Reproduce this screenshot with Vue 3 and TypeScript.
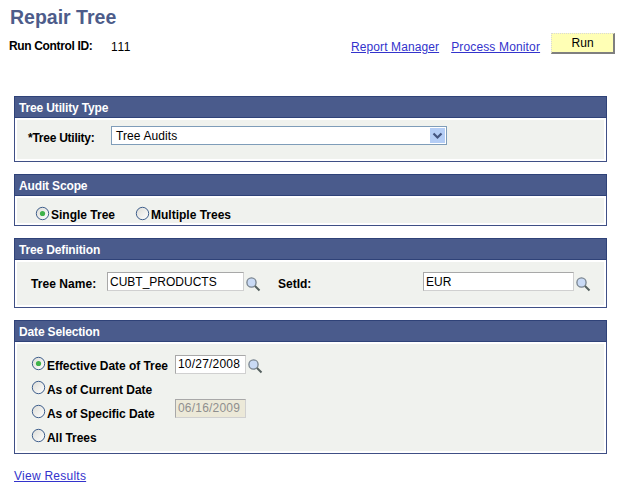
<script setup lang="ts">
const dateOptions: { label: string; on: boolean }[] = [
  { label: 'Effective Date of Tree', on: true },
  { label: 'As of Current Date', on: false },
  { label: 'As of Specific Date', on: false },
  { label: 'All Trees', on: false },
]
</script>

<template>
  <div class="page">
    <h1 class="title">Repair Tree</h1>
    <div class="toolbar">
      <span class="rc-label">Run Control ID:</span>
      <span class="rc-value">111</span>
      <a class="link report" href="#">Report Manager</a>
      <a class="link process" href="#">Process Monitor</a>
      <button class="run" type="button">Run</button>
    </div>

    <section class="panel utility">
      <h2 class="head">Tree Utility Type</h2>
      <div class="body utility-body">
        <span class="lab">*Tree Utility:</span>
        <div class="select">
          <span class="select-text">Tree Audits</span>
          <span class="arrow">
            <svg width="15" height="15" viewBox="0 0 15 15">
              <path d="M3.5 5.5 L7.5 9.5 L11.5 5.5" fill="none" stroke="#44557f" stroke-width="2.2" />
            </svg>
          </span>
        </div>
      </div>
    </section>

    <section class="panel scope">
      <h2 class="head">Audit Scope</h2>
      <div class="body scope-body">
        <label class="radio r1">
          <svg class="dot" width="15" height="15" viewBox="0 0 15 15">
            <defs>
              <linearGradient id="rg" x1="0" y1="0" x2="1" y2="1">
                <stop offset="0" stop-color="#dcdcd6" /><stop offset="1" stop-color="#ffffff" />
              </linearGradient>
            </defs>
            <circle cx="7.5" cy="7.5" r="6.2" fill="url(#rg)" stroke="#3f5f8c" />
            <circle cx="7.5" cy="7.5" r="2.6" fill="#3fb24a" />
          </svg>
          Single Tree
        </label>
        <label class="radio r2">
          <svg class="dot" width="15" height="15" viewBox="0 0 15 15">
            <circle cx="7.5" cy="7.5" r="6.2" fill="url(#rg)" stroke="#3f5f8c" />
          </svg>
          Multiple Trees
        </label>
      </div>
    </section>

    <section class="panel definition">
      <h2 class="head">Tree Definition</h2>
      <div class="body def-body">
        <span class="lab name-lab">Tree Name:</span>
        <div class="input name-input">CUBT_PRODUCTS</div>
        <svg class="glass" width="16" height="16" viewBox="0 0 16 16">
          <circle cx="6.5" cy="6.5" r="4.6" fill="#c9daf5" stroke="#77838f" stroke-width="1.3" />
          <path d="M10 10 L14.5 14.5" stroke="#55605f" stroke-width="2" />
        </svg>
        <span class="lab set-lab">SetId:</span>
        <div class="input set-input">EUR</div>
        <svg class="glass" width="16" height="16" viewBox="0 0 16 16">
          <circle cx="6.5" cy="6.5" r="4.6" fill="#c9daf5" stroke="#77838f" stroke-width="1.3" />
          <path d="M10 10 L14.5 14.5" stroke="#55605f" stroke-width="2" />
        </svg>
      </div>
    </section>

    <section class="panel dates">
      <h2 class="head">Date Selection</h2>
      <div class="body date-body">
        <div class="date-options">
          <label v-for="o in dateOptions" :key="o.label" class="radio">
            <svg class="dot" width="15" height="15" viewBox="0 0 15 15">
              <circle cx="7.5" cy="7.5" r="6.2" fill="url(#rg)" stroke="#3f5f8c" />
              <circle v-if="o.on" cx="7.5" cy="7.5" r="2.6" fill="#3fb24a" />
            </svg>
            {{ o.label }}
          </label>
        </div>
        <div class="date-inputs">
          <div class="date-row">
            <div class="input date-input">10/27/2008</div>
            <svg class="glass date-glass" width="16" height="16" viewBox="0 0 16 16">
              <circle cx="6.5" cy="6.5" r="4.6" fill="#c9daf5" stroke="#77838f" stroke-width="1.3" />
              <path d="M10 10 L14.5 14.5" stroke="#55605f" stroke-width="2" />
            </svg>
          </div>
          <div class="input date-input disabled">06/16/2009</div>
        </div>
      </div>
    </section>

    <a class="link results" href="#">View Results</a>
  </div>
</template>

<style>
html, body { background: #ffffff; }
</style>

<style scoped>
.page {
  width: 626px;
  height: 491px;
  box-sizing: border-box;
  overflow: hidden;
  background: #fff;
  font-family: "Liberation Sans", Arial, sans-serif;
  font-size: 12px;
  color: #000;
}
.title {
  margin: 0;
  padding: 7px 0 0 10px;
  height: 31px;
  box-sizing: border-box;
  font-size: 19.5px;
  line-height: 21px;
  font-weight: bold;
  color: #4d5c8a;
}
.toolbar {
  display: flex;
  align-items: center;
  height: 22px;
  margin-top: 4px;
  padding-left: 9px;
}
.rc-label { font-weight: bold; width: 102px; letter-spacing: -0.35px; }
.rc-value { width: 240px; margin-top: 1px; letter-spacing: 0.6px; }
.link { color: #3333cc; text-decoration: underline; }
.toolbar .link { margin-top: 1px; }
.report { margin-right: 12px; letter-spacing: 0.1px; }
.process { margin-right: 11px; letter-spacing: 0.15px; }
.run {
  align-self: flex-start;
  margin-top: -2px;
  width: 64px;
  height: 21px;
  padding: 0 0 1px;
  box-sizing: border-box;
  background: #ffffb5;
  border: 1px dotted #d8d8d8;
  border-right: 2px solid #7f7f7f;
  border-bottom: 2px solid #7f7f7f;
  font-family: inherit;
  font-size: 12px;
  color: #000;
}
.panel {
  width: 593px;
  margin: 12px 0 0 14px;
  box-sizing: border-box;
  border: 1px solid #3f4f85;
  border-top: 0;
  background: #fff;
}
.utility { margin-top: 39px; height: 66px; }
.scope { height: 52px; }
.definition { height: 70px; }
.dates { height: 134px; }
.head {
  margin: 0 -1px;
  height: 22px;
  box-sizing: border-box;
  padding: 1px 0 0 4px;
  border: 1px solid #2f4278;
  background: #4a5b8c;
  color: #fff;
  font-size: 12px;
  font-weight: bold;
  line-height: 20px;
  letter-spacing: -0.15px;
}
.body {
  box-sizing: border-box;
  margin: 2px 2px 2px;
  background: #f0f2ee;
  height: calc(100% - 26px);
  display: flex;
}
.lab { font-weight: bold; }
.utility-body { align-items: flex-start; padding: 6px 0 0 11px; }
.utility-body .lab { width: 83px; margin-top: 5px; letter-spacing: -0.25px; }
.select {
  width: 336px;
  height: 19px;
  box-sizing: border-box;
  border: 1px solid #7f9db9;
  background: #fff;
  padding-left: 4px;
  display: flex;
  justify-content: space-between;
  align-items: center;
}
.select-text { letter-spacing: 0.1px; }
.arrow {
  width: 15px;
  height: 15px;
  background: #b4cdf5;
  margin-right: 1px;
}
.arrow svg { display: block; }
.radio {
  display: flex;
  align-items: center;
  font-weight: bold;
}
.dot { margin-right: 1px; flex: none; margin-top: -4px; }
.scope-body { padding: 10px 0 0 18px; align-items: flex-start; }
.r1 { width: 100px; }
.def-body { align-items: center; padding-top: 1px; }
.input {
  height: 19px;
  box-sizing: border-box;
  border: 1px solid #a8a8a8;
  border-right-color: #d0d0d0;
  border-bottom-color: #d0d0d0;
  background: #fff;
  padding-left: 2px;
  line-height: 18px;
}
.name-lab { margin-left: 14px; width: 76px; letter-spacing: 0.05px; }
.name-input { width: 137px; margin-bottom: 6px; }
.glass { flex: none; margin-left: 1px; }
.set-lab { margin-left: 17px; width: 145px; }
.set-input { width: 151px; margin-bottom: 6px; }
.date-body { padding: 10px 0 0 14px; align-items: flex-start; }
.date-options { width: 144px; display: flex; flex-direction: column; gap: 7px; padding-top: 3px; letter-spacing: -0.05px; }
.date-options .radio { height: 17px; white-space: nowrap; }
.date-inputs { display: flex; flex-direction: column; gap: 25px; }
.date-row { display: flex; align-items: center; }
.date-input { width: 71px; letter-spacing: 0.2px; line-height: 17px; }
.date-glass { margin-top: 4px; }
.disabled { background: #ece9d8; color: #8f8f8f; }
.results { display: block; width: fit-content; margin: 15px 0 0 14px; line-height: 14px; letter-spacing: 0.25px; }
</style>
